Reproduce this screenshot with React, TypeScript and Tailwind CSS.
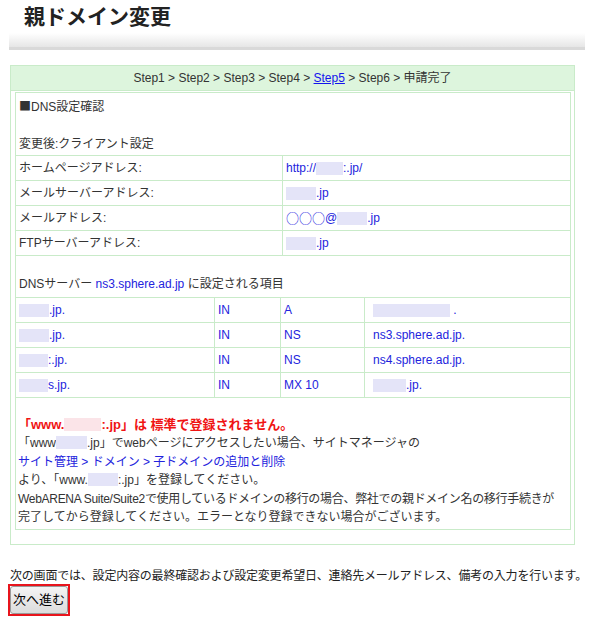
const font = { fontFamily: '"Liberation Sans", "Noto Sans CJK JP", sans-serif' };
const jp = { fontFamily: '"Noto Sans CJK JP", sans-serif' };

function Blob({ w }: { w: number }) {
  return <span className="inline-block h-[13px] align-[-2px] bg-[#e4e4f8]" style={{ width: w }} />;
}

const cell = "flex items-center px-[3px] border-[#c9ebc9]";
const blue = "text-[#2323dd]";

function InfoRow({ label, children }: { label: string; children: React.ReactNode }) {
  return (
    <div className="flex h-[25px] border-b border-[#c9ebc9]">
      <div className={`${cell} w-[266px] shrink-0`}>{label}</div>
      <div className={`${cell} flex-1 border-l ${blue}`}>{children}</div>
    </div>
  );
}

function DnsRow({ a, b, c, d }: { a: React.ReactNode; b: string; c: string; d: React.ReactNode }) {
  return (
    <div className={`flex h-[25px] border-b border-[#c9ebc9] ${blue}`}>
      <div className={`${cell} w-[198px] shrink-0`}>{a}</div>
      <div className={`${cell} w-[66px] shrink-0 border-l`}>{b}</div>
      <div className={`${cell} w-[84px] shrink-0 border-l`}>{c}</div>
      <div className={`${cell} flex-1 border-l pl-[8px]`}>{d}</div>
    </div>
  );
}

export default function App() {
  return (
    <div className="w-[600px] h-[620px] bg-white text-[#333] text-[12px]" style={font}>
      <div className="h-[33px] pl-[24px] pt-[4px] text-[21px] font-bold leading-[26px] text-[#222]">親ドメイン変更</div>
      <div className="ml-[9px] mr-[15px] h-[17px] bg-gradient-to-b from-white to-[#e6e6e6] border-b-[3px] border-[#d9d9d9]" />

      <div className="ml-[10px] mt-[15px] w-[565px] border border-[#c9ebc9] pb-[14px]">
        <div className="h-[25px] bg-[#ddf5dd] border-b border-[#c9ebc9] flex items-center justify-center text-[12px]">
          Step1 &gt; Step2 &gt; Step3 &gt; Step4 &gt;&nbsp;<span className="text-[#1414ee] underline">Step5</span>&nbsp;&gt; Step6 &gt; 申請完了
        </div>
        <div className="ml-[4px] mr-[3px] mt-[1px] border border-[#c9ebc9]">
          <div className="h-[63px] border-b border-[#c9ebc9] px-[3px] pt-[5px]">
            <div className="leading-[16px]">
              <span style={jp}>■</span>DNS設定確認
            </div>
            <div className="leading-[16px] mt-[21px]">変更後:クライアント設定</div>
          </div>
          <InfoRow label="ホームページアドレス:">
            http://<Blob w={27} />:.jp/
          </InfoRow>
          <InfoRow label="メールサーバーアドレス:">
            <Blob w={30} />.jp
          </InfoRow>
          <InfoRow label="メールアドレス:">
            <span style={jp} className="text-[13px]">○○○</span>@<Blob w={30} />.jp
          </InfoRow>
          <InfoRow label="FTPサーバーアドレス:">
            <Blob w={30} />.jp
          </InfoRow>
          <div className="h-[42px] border-b border-[#c9ebc9] px-[3px] flex items-end pb-[4px]">
            DNSサーバー&nbsp;<span className={blue}>ns3.sphere.ad.jp</span>&nbsp;に設定される項目
          </div>
          <DnsRow a={<><Blob w={30} />.jp.</>} b="IN" c="A" d={<><Blob w={77} />&nbsp;.</>} />
          <DnsRow a={<><Blob w={30} />.jp.</>} b="IN" c="NS" d="ns3.sphere.ad.jp." />
          <DnsRow a={<><Blob w={29} />:.jp.</>} b="IN" c="NS" d="ns4.sphere.ad.jp." />
          <DnsRow a={<><Blob w={29} />s.jp.</>} b="IN" c="MX 10" d={<><Blob w={33} />.jp.</>} />
          <div className="h-[131px] px-[2px] pt-[18px]">
            <div className="text-[#f01414] font-bold text-[13px] leading-[18px]">
              「www.<span className="inline-block w-[37px] h-[13px] align-[-2px] bg-[#fbe4e8]" />:.jp」は 標準で登録されません。
            </div>
            <div className="leading-[18.5px]">
              「www<Blob w={31} />.jp」でwebページにアクセスしたい場合、サイトマネージャの
            </div>
            <div className={`leading-[18.5px] ${blue}`}>サイト管理 &gt; ドメイン &gt; 子ドメインの追加と削除</div>
            <div className="leading-[18.5px]">
              より、「www.<Blob w={30} />:.jp」を登録してください。
            </div>
            <div className="leading-[18.5px] tracking-[-0.3px]">
              WebARENA Suite/Suite2で使用しているドメインの移行の場合、弊社での親ドメイン名の移行手続きが
            </div>
            <div className="leading-[18.5px]">完了してから登録してください。エラーとなり登録できない場合がございます。</div>
          </div>
        </div>
      </div>

      <div className="ml-[10px] mt-[23px] text-[12px] leading-[16px] text-[#222] tracking-[-0.2px]">
        次の画面では、設定内容の最終確認および設定変更希望日、連絡先メールアドレス、備考の入力を行います。
      </div>
      <div className="ml-[8px] inline-block border-2 border-[#e8141c]">
        <button className="block h-[28px] px-[2px] text-[13px] text-black bg-gradient-to-b from-[#f4f4f4] to-[#dcdcdc] border border-[#9a9a9a] rounded-[3px]">
          次へ進む
        </button>
      </div>
    </div>
  );
}
